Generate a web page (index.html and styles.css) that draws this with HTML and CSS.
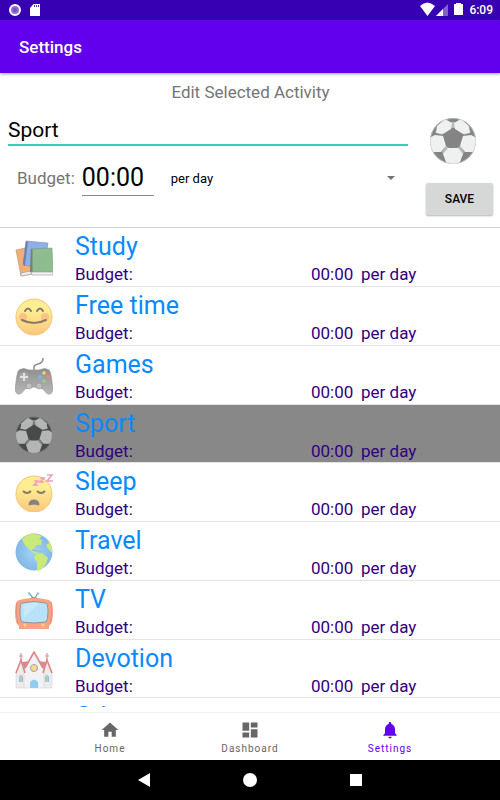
FILE: index.html
```html
<!DOCTYPE html>
<html lang="en">
<head>
    <meta charset="UTF-8">
    <meta name="viewport" content="width=device-width, initial-scale=1.0">
    <title>Settings</title>
    <link rel="stylesheet" href="styles.css">
</head>
<body>
    <!-- Shared ball icon -->
    <svg class="defs" aria-hidden="true">
        <defs>
            <clipPath id="ball-clip"><circle cx="24" cy="24" r="23"/></clipPath>
            <symbol id="ball" viewBox="0 0 48 48">
                <circle cx="24" cy="24" r="23" fill="#0c0c0c"/>
                <g clip-path="url(#ball-clip)" fill="#e0e3e3">
                    <path d="M8 9 16 2 23 6 22 12 14 17 7 16Z"/>
                    <path d="M40 9 32 2 25 6 26 12 34 17 41 16Z"/>
                    <path d="M0 21 6 18 14 19 17 29 12 35 4 35 0 29Z"/>
                    <path d="M48 21 42 18 34 19 31 29 36 35 44 35 48 29Z"/>
                    <path d="M19 31H29L34 37 31 45 27 48H21L17 45 14 37Z"/>
                    <path d="M22 11H26V5H22ZM6 15 13 18 14 16 7 14ZM42 15 35 18 34 16 41 14ZM13 35 17 29 20 31 15 38ZM35 35 31 29 28 31 33 38Z" opacity=".5"/>
                </g>
                <circle cx="24" cy="24" r="22.5" fill="none" stroke="#aaa" opacity=".5"/>
            </symbol>
        </defs>
    </svg>

    <div class="status-bar">
        <svg class="status-left" viewBox="0 0 36 20">
            <circle cx="10" cy="10" r="5" fill="#8e6fd0" stroke="#fff" stroke-width="2"/>
            <circle cx="10" cy="10" r="2" fill="#7450c4"/>
            <path d="M28.500 4H35v12H25V8z" fill="#fff"/>
            <path d="M29 5h1v2h-1zM31 5h1v2h-1zM33 5h1v2h-1z" fill="#5a35bd"/>
        </svg>
        <div class="status-right">
            <svg class="status-icons" viewBox="0 0 46 20">
                <path d="M1 6Q8-1 16 6L8.500 16Z" fill="#fff"/>
                <path d="M29 4V16H17Z" fill="#8360d0"/>
                <path d="M24 9V16H17Z" fill="#fff"/>
                <path d="M35 4h2V3h5v1h2v11H35z" fill="#fff"/>
            </svg>
            <span>6:09</span>
        </div>
    </div>

    <header class="app-bar">
        <h1>Settings</h1>
    </header>

    <form class="edit-form">
        <h2>Edit Selected Activity</h2>
        <div class="edit-body">
            <div class="fields">
                <input class="name-input" type="text" value="Sport" aria-label="Activity name">
                <div class="budget-row">
                    <label for="budget">Budget:</label>
                    <input class="budget-input" id="budget" type="text" value="00:00">
                    <div class="period">
                        <select aria-label="Budget period">
                            <option>per day</option>
                        </select>
                        <svg class="arrow" viewBox="0 0 8 4"><path d="M0 0H8L4 4Z" fill="#737373"/></svg>
                    </div>
                </div>
            </div>
            <div class="side">
                <svg class="big-icon"><use href="#ball"/></svg>
                <button class="save-btn" type="button">SAVE</button>
            </div>
        </div>
    </form>

    <main class="list-wrap">
        <ul class="activity-list">
            <li><button class="activity">
                <svg class="icon" viewBox="0 0 38 38">
                    <path d="M1 11 10 9 17 35 6 37Z" fill="#f4ae72" stroke="#ad9278" stroke-width=".6"/>
                    <path d="M6 34 16 32 17 35 6 37Z" fill="#eee" stroke="#999" stroke-width=".6"/>
                    <path d="M11 2 33 4 29 29 8 26Z" fill="#8fafe8" stroke="#7b8fb7" stroke-width=".6"/>
                    <path d="M11 2 13 3 10 27 8 25Z" fill="#6f83ac"/>
                    <path d="M16 10 37 9 38 35 16 34Z" fill="#8dbd8f" stroke="#789a7b" stroke-width=".6"/>
                    <path d="M16 10 17.500 10 17.500 33 15 33Z" fill="#74817a"/>
                    <path d="M16 33 38 33V36L17 36Z" fill="#f2f2f2" stroke="#999" stroke-width=".6"/>
                </svg>
                <span class="name">Study</span>
                <span class="label">Budget:</span>
                <span class="time">00:00</span>
                <span class="per">per day</span>
            </button></li>
            <li><button class="activity">
                <svg class="icon" viewBox="0 0 38 38">
                    <defs><linearGradient id="face" x2="0" y2="1"><stop offset=".3" stop-color="#feee93"/><stop offset="1" stop-color="#fbc77d"/></linearGradient></defs>
                    <circle cx="19" cy="19" r="18" fill="url(#face)" stroke="#f7c27c"/>
                    <circle cx="8" cy="19" r="4" fill="#f9b483" opacity=".7"/>
                    <circle cx="30" cy="19" r="4" fill="#f9b483" opacity=".7"/>
                    <path d="M10 13Q13 8 16 13M22 13Q25 8 28 13" fill="none" stroke="#8b7765" stroke-width="2" stroke-linecap="round"/>
                    <path d="M7 22Q19 28 31 22" fill="none" stroke="#8b7765" stroke-width="2" stroke-linecap="round"/>
                </svg>
                <span class="name">Free time</span>
                <span class="label">Budget:</span>
                <span class="time">00:00</span>
                <span class="per">per day</span>
            </button></li>
            <li><button class="activity">
                <svg class="icon" viewBox="0 0 38 38">
                    <defs><linearGradient id="pad" x2="0" y2="1"><stop stop-color="#8e8e8e"/><stop offset="1" stop-color="#b8b8b8"/></linearGradient></defs>
                    <path d="M19 14V10Q19 8 23 7Q28 6 28 1" fill="none" stroke="#8d8d8d" stroke-width="1.500"/>
                    <path d="M4 13Q8 10 14 13H24Q30 10 34 13Q36 15 37 25Q39 36 35 37Q32 38 28 32Q19 28 10 32Q6 38 3 37Q-1 36 1 25Q2 15 4 13Z" fill="url(#pad)" stroke="#999" stroke-width=".7"/>
                    <circle cx="9" cy="20" r="5" fill="#a7a7a7"/>
                    <path d="M8 16h2v3h3v2h-3v3h-2v-3H5v-2h3z" fill="#e3e3e3"/>
                    <circle cx="14" cy="29" r="3" fill="#c0c0c0" stroke="#888" stroke-width=".5"/>
                    <circle cx="24" cy="29" r="3" fill="#c0c0c0" stroke="#888" stroke-width=".5"/>
                    <circle cx="29" cy="16" r="1.800" fill="#f5d375"/>
                    <circle cx="33" cy="20" r="1.800" fill="#f0867d"/>
                    <circle cx="25" cy="20" r="1.800" fill="#78b7f2"/>
                    <circle cx="29" cy="24" r="1.800" fill="#8fcf8f"/>
                </svg>
                <span class="name">Games</span>
                <span class="label">Budget:</span>
                <span class="time">00:00</span>
                <span class="per">per day</span>
            </button></li>
            <li><button class="activity selected">
                <svg class="icon faded"><use href="#ball"/></svg>
                <span class="name">Sport</span>
                <span class="label">Budget:</span>
                <span class="time">00:00</span>
                <span class="per">per day</span>
            </button></li>
            <li><button class="activity">
                <svg class="icon" viewBox="0 0 38 38">
                    <circle cx="19" cy="20" r="18" fill="url(#face)" stroke="#f7c27c"/>
                    <path d="M8 17Q12 21 16 17M22 17Q26 21 30 17" fill="none" stroke="#8b7765" stroke-width="2"/>
                    <path d="M14 31Q14 26 19 26T24 31Q19 29 14 31Z" fill="#86807e" stroke="#86807e"/>
                    <path d="M19 7h4l-4 4h4M25 4h4l-4 4h4M32 1h5l-5 6h6" fill="none" stroke="#ee9dc1" stroke-width="1.600"/>
                </svg>
                <span class="name">Sleep</span>
                <span class="label">Budget:</span>
                <span class="time">00:00</span>
                <span class="per">per day</span>
            </button></li>
            <li><button class="activity">
                <svg class="icon" viewBox="0 0 38 38">
                    <defs><radialGradient id="sea"><stop offset=".2" stop-color="#9ccdf5"/><stop offset="1" stop-color="#82b7e6"/></radialGradient></defs>
                    <circle cx="19" cy="19" r="18.500" fill="url(#sea)"/>
                    <path d="M7 6Q13 0 21 1L27 3 24 6 27 7 26 12 22 12 17 17 20 19 24 20 20 21 15 17 9 11Z" fill="#c9e979"/>
                    <path d="M21 21 27 20 33 25 31 31 26 37 22 38 22 29 19 25Z" fill="#c9e979"/>
                    <path d="M32 6Q38 12 37 20L33 16 31 12 34 10Z" fill="#c9e979"/>
                    <path d="M17 17l6 1 4 1" stroke="#8ec1b0" fill="none"/>
                </svg>
                <span class="name">Travel</span>
                <span class="label">Budget:</span>
                <span class="time">00:00</span>
                <span class="per">per day</span>
            </button></li>
            <li><button class="activity">
                <svg class="icon" viewBox="0 0 38 38">
                    <path d="M18 6 14 1M20 6 23 1" stroke="#82a6b8" stroke-width="1.300"/>
                    <circle cx="14" cy="1.500" r="1.200" fill="#7fc6e8"/><circle cx="23" cy="1.500" r="1.200" fill="#7fc6e8"/>
                    <path d="M14 7Q19 3 24 7Z" fill="#b28c83"/>
                    <path d="M4 8Q19 4 34 8Q38 9 38 20Q38 32 34 34V37H4V34Q0 32 0 20Q0 9 4 8Z" fill="#f9a384"/>
                    <path d="M2 10Q0 20 3 32M36 10Q38 20 35 32" fill="none" stroke="#d9937d"/>
                    <path d="M7 11Q19 8 31 11Q33 12 33 20T31 30Q19 32 7 30Q5 29 5 20T7 11Z" fill="#b9e1f8" stroke="#8d9498"/>
                    <path d="M8 13Q15 10 24 11L9 26Z" fill="#c8e9fa"/>
                    <circle cx="10" cy="33" r="1.500" fill="#fbd480"/><circle cx="28" cy="33" r="1.500" fill="#fbd480"/>
                </svg>
                <span class="name">TV</span>
                <span class="label">Budget:</span>
                <span class="time">00:00</span>
                <span class="per">per day</span>
            </button></li>
            <li><button class="activity">
                <svg class="icon" viewBox="0 0 38 38">
                    <path d="M1 22 6 10 11 22V37H1ZM27 22 32 10 37 22V37H27Z" fill="#ececec" stroke="#ccc" stroke-width=".5"/>
                    <path d="M7 11 15 10 11 22ZM31 11 23 10 27 22Z" fill="#d88a8e"/>
                    <path d="M9 19 19 2 29 19V37H9Z" fill="#f2f2f2" stroke="#ccc" stroke-width=".5"/>
                    <path d="M10 17 19 1 28 17M1 22 6 9 10 22M28 22 32 9 37 22" fill="none" stroke="#e0868a" stroke-width="1.600"/>
                    <path d="M6 10V2M4 5h4M32 10V2M30 5h4" stroke="#df9496" stroke-width="1.200"/>
                    <circle cx="19" cy="17" r="3.500" fill="#f6db86" stroke="#8fb5d6"/>
                    <circle cx="19" cy="17" r="3.500" fill="none" stroke="#d28fc3" stroke-dasharray="2 3"/>
                    <path d="M15 37V31Q19 26 23 31V37Z" fill="#91cdf0"/>
                    <path d="M4 31V26Q6 22 8 26V31ZM30 31V26Q32 22 34 26V31Z" fill="#91bfe2"/>
                    <path d="M6 25v6M32 25v6" stroke="#efd780"/>
                </svg>
                <span class="name">Devotion</span>
                <span class="label">Budget:</span>
                <span class="time">00:00</span>
                <span class="per">per day</span>
            </button></li>
            <li><button class="activity">
                <svg class="icon"></svg>
                <span class="name">Other</span>
            </button></li>
        </ul>
    </main>

    <nav class="bottom-nav">
        <a href="#">
            <svg viewBox="0 0 24 24"><path d="M10 20v-6h4v6h5v-8h3L12 3 2 12h3v8z"/></svg>
            Home
        </a>
        <a href="#">
            <svg viewBox="0 0 24 24"><path d="M3 13h8V3H3v10zm0 8h8v-6H3v6zm10 0h8V11h-8v10zm0-18v6h8V3h-8z"/></svg>
            Dashboard
        </a>
        <a href="#" class="active">
            <svg viewBox="0 0 24 24"><path d="M12 22c1.100 0 2-.9 2-2h-4c0 1.100.9 2 2 2zm6-6v-5c0-3.070-1.640-5.640-4.500-6.320V4c0-.83-.67-1.500-1.500-1.500s-1.500.67-1.500 1.500v.68C7.630 5.360 6 7.920 6 11v5l-2 2v1h16v-1l-2-2z"/></svg>
            Settings
        </a>
    </nav>

    <div class="system-bar">
        <button aria-label="Back"><svg viewBox="0 0 14 14"><path d="M1 7 13 0V14Z"/></svg></button>
        <button aria-label="Home"><svg viewBox="0 0 14 14"><circle cx="7" cy="7" r="7"/></svg></button>
        <button aria-label="Recent apps"><svg viewBox="0 0 14 14"><path d="M1 1H13V13H1Z"/></svg></button>
    </div>
</body>
</html>
```
FILE: styles.css
```css
* {
    margin: 0;
    padding: 0;
    box-sizing: border-box;
}

body {
    font-family: Roboto, sans-serif;
    background-color: #fff;
    display: flex;
    flex-direction: column;
    height: 100vh;
    overflow: hidden;
}

button,
input,
select {
    font-family: inherit;
    border: none;
    border-radius: 0;
    outline: none;
    background: none;
}

svg {
    display: block;
}

.defs {
    position: absolute;
    width: 0;
    height: 0;
}

/* Status bar */
.status-bar {
    display: flex;
    justify-content: space-between;
    height: 20px;
    padding: 0 7px 0 5px;
    background-color: #3700b3;
    color: #fff;
    font-size: 12px;
    font-weight: 500;
    line-height: 20px;
}

.status-left {
    width: 36px;
    height: 20px;
}

.status-right {
    display: flex;
    gap: 4px;
}

.status-icons {
    width: 46px;
    height: 20px;
}

.app-bar {
    display: flex;
    align-items: center;
    height: 53px;
    padding: 0 19px;
    background-color: #6200ee;
    color: #fff;
    box-shadow: 0 1px 3px rgba(0, 0, 0, 0.4);
}

.app-bar h1 {
    font-size: 17px;
    font-weight: 500;
}

/* Edit form */
.edit-form {
    padding: 8px 7px 12px 8px;
    border-bottom: 1px solid #d0d0d0;
}

.edit-form h2 {
    color: #757575;
    font-size: 17px;
    font-weight: 400;
    line-height: 23px;
    text-align: center;
}

.edit-body {
    display: flex;
    gap: 18px;
    padding-top: 1px;
}

.fields {
    flex: 1;
}

.name-input {
    display: block;
    width: 100%;
    height: 41px;
    padding-top: 11px;
    border-bottom: 2px solid #39cdb8;
    font-size: 21px;
}

.budget-row {
    display: flex;
    align-items: center;
    height: 64px;
    padding-left: 9px;
}

.budget-row label {
    color: #757575;
    font-size: 17px;
}

.budget-input {
    width: 72px;
    height: 36px;
    margin: 0 8px 0 7px;
    border-bottom: 1px solid #888;
    font-size: 25px;
}

.period {
    display: flex;
    align-items: center;
    flex: 1;
    padding-right: 13px;
}

.period select {
    flex: 1;
    height: 30px;
    padding-left: 9px;
    appearance: none;
    font-size: 13px;
}

.arrow {
    width: 8px;
    height: 4px;
}

.side {
    display: flex;
    flex-direction: column;
    gap: 18px;
    padding-top: 12px;
}

.big-icon {
    width: 48px;
    height: 48px;
    margin-left: 3px;
    opacity: 0.5;
}

.save-btn {
    width: 67px;
    height: 32px;
    border-radius: 2px;
    background-color: #d6d7d7;
    box-shadow: 0 1px 2px rgba(0, 0, 0, 0.3);
    font-size: 12px;
    font-weight: 500;
}

/* Activity list */
.list-wrap {
    flex: 1;
    min-height: 0;
    margin-bottom: 5px;
    overflow: hidden;
}

.activity-list {
    display: grid;
    grid-auto-rows: 59px 59px 59px 58px;
    list-style: none;
}

.activity {
    display: grid;
    grid-template-columns: 60px 1fr 50px 139px;
    grid-template-rows: 32px 20px;
    align-content: start;
    width: 100%;
    height: 100%;
    padding: 4px 0 0 15px;
    border-bottom: 1px solid #e4e4e4;
    color: #310080;
    font-size: 17px;
    line-height: 20px;
    text-align: left;
}

.activity.selected {
    background-color: #888;
}

.icon {
    grid-row: 1 / 3;
    align-self: center;
    width: 38px;
    height: 38px;
}

.faded {
    opacity: 0.5;
}

.name {
    grid-column: 2 / 5;
    color: #0a8aff;
    font-size: 25px;
    line-height: 30px;
}

/* Bottom navigation */
.bottom-nav {
    display: flex;
    justify-content: center;
    height: 48px;
    border-top: 1px solid #f0f0f0;
}

.bottom-nav a {
    display: flex;
    flex-direction: column;
    align-items: center;
    width: 28%;
    padding-top: 7px;
    color: #666;
    font-size: 10px;
    letter-spacing: 1px;
    line-height: 17px;
    text-decoration: none;
}

.bottom-nav svg {
    width: 20px;
    height: 20px;
    fill: currentColor;
}

.bottom-nav .active {
    color: #6200ee;
}

.system-bar {
    display: flex;
    justify-content: center;
    align-items: center;
    gap: 92px;
    height: 40px;
    background-color: #000;
}

.system-bar svg {
    width: 14px;
    height: 14px;
    fill: #fff;
}
```
